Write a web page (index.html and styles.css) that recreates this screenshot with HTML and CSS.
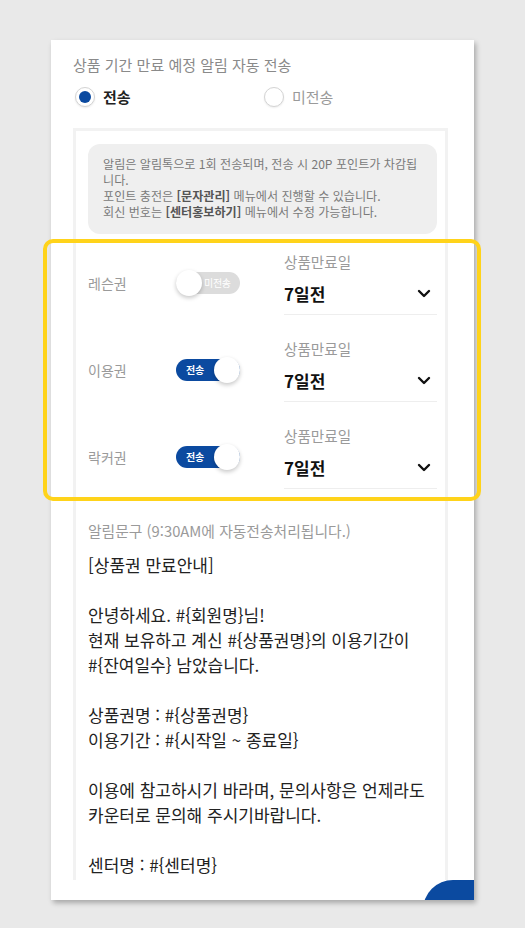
FILE: index.html
```html
<!DOCTYPE html>
<html lang="ko">
<head>
<meta charset="utf-8">
<title>상품 기간 만료 예정 알림</title>
<link rel="stylesheet" href="styles.css">
</head>
<body>
<div class="stage">
  <div class="card">
    <p class="title">상품 기간 만료 예정 알림 자동 전송</p>
    <div class="radios">
      <div class="radio on"><span class="dot"></span><span class="rtext">전송</span></div>
      <div class="radio"><span class="dot"></span><span class="rtext">미전송</span></div>
    </div>
    <div class="panel">
      <div class="notice">알림은 알림톡으로 1회 전송되며, 전송 시 20P 포인트가 차감됩니다.<br>포인트 충전은 <b>[문자관리]</b> 메뉴에서 진행할 수 있습니다.<br>회신 번호는 <b>[센터홍보하기]</b> 메뉴에서 수정 가능합니다.</div>
      <div class="rows">
        <div class="highlight"></div>
        <div class="row">
          <span class="row-label">레슨권</span>
          <span class="toggle off"><span class="knob"></span><span class="ttext">미전송</span></span>
          <div class="select">
            <div class="sel-label">상품만료일</div>
            <div class="sel-value"><span>7일전</span><svg class="chev" width="14" height="9" viewBox="0 0 14 9"><path d="M2 2 L7 7 L12 2" fill="none" stroke="#111" stroke-width="2.4" stroke-linecap="round" stroke-linejoin="round"/></svg></div>
          </div>
        </div>
        <div class="row">
          <span class="row-label">이용권</span>
          <span class="toggle on"><span class="ttext">전송</span><span class="knob"></span></span>
          <div class="select">
            <div class="sel-label">상품만료일</div>
            <div class="sel-value"><span>7일전</span><svg class="chev" width="14" height="9" viewBox="0 0 14 9"><path d="M2 2 L7 7 L12 2" fill="none" stroke="#111" stroke-width="2.4" stroke-linecap="round" stroke-linejoin="round"/></svg></div>
          </div>
        </div>
        <div class="row">
          <span class="row-label">락커권</span>
          <span class="toggle on"><span class="ttext">전송</span><span class="knob"></span></span>
          <div class="select">
            <div class="sel-label">상품만료일</div>
            <div class="sel-value"><span>7일전</span><svg class="chev" width="14" height="9" viewBox="0 0 14 9"><path d="M2 2 L7 7 L12 2" fill="none" stroke="#111" stroke-width="2.4" stroke-linecap="round" stroke-linejoin="round"/></svg></div>
          </div>
        </div>
      </div>
      <div class="msg">
        <p class="msg-label">알림문구 (9:30AM에 자동전송처리됩니다.)</p>
        <div class="msg-body">[상품권 만료안내]<br><br>안녕하세요. #{회원명}님!<br>현재 보유하고 계신 #{상품권명}의 이용기간이<br>#{잔여일수} 남았습니다.<br><br>상품권명 : #{상품권명}<br>이용기간 : #{시작일 ~ 종료일}<br><br>이용에 참고하시기 바라며, 문의사항은 언제라도<br>카운터로 문의해 주시기바랍니다.<br><br>센터명 : #{센터명}</div>
      </div>
    </div>
    <div class="fab-clip"><div class="fab"></div></div>
  </div>
</div>
</body>
</html>
```
FILE: styles.css
```css
* { box-sizing: border-box; }
html, body { margin: 0; padding: 0; }
body {
  background: #e9e9e9;
  font-family: "Noto Sans CJK KR", "Noto Sans", sans-serif;
  width: 525px;
  height: 928px;
  overflow: hidden;
}
.stage {
  padding: 40px 0 0 51px;
}
.card {
  position: relative;
  width: 423px;
  height: 860px;
  background: #fff;
  box-shadow: 2px 3px 5px rgba(0, 0, 0, 0.28);
  padding: 15px 0 20px 0;
  display: flex;
  flex-direction: column;
}
.title {
  margin: 0 0 0 22px;
  font-size: 15px;
  line-height: 20px;
  color: #8a8a8a;
}
.radios {
  margin: 10px 0 0 24px;
  height: 24px;
  display: grid;
  grid-template-columns: 189px auto;
  align-items: center;
}
.radio {
  display: flex;
  align-items: center;
  gap: 8px;
}
.dot {
  width: 20px;
  height: 20px;
  border-radius: 50%;
  border: 1px solid #d4d4d4;
  background: #fff;
  box-shadow: 0 1px 2px rgba(0, 0, 0, 0.08);
  display: flex;
  align-items: center;
  justify-content: center;
}
.radio.on .dot::after {
  content: "";
  width: 12px;
  height: 12px;
  border-radius: 50%;
  background: #0b4aa0;
}
.rtext {
  font-size: 15px;
  line-height: 20px;
  color: #9a9a9a;
}
.radio.on .rtext {
  color: #222;
  font-weight: 700;
}
.panel {
  flex: 1;
  margin: 19px 26px 0 22px;
  border: 3px solid #f2f2f2;
  border-bottom: none;
  padding: 13px 8px 0 12px;
}
.notice {
  background: #efefef;
  border-radius: 12px;
  padding: 12px 12px 14px 15px;
  font-size: 12.1px;
  line-height: 16px;
  color: #7a7a7a;
}
.notice b {
  color: #555;
  font-weight: 700;
}
.rows {
  position: relative;
  margin-top: 17px;
  display: flex;
  flex-direction: column;
  gap: 23px;
}
.highlight {
  position: absolute;
  top: -12px;
  bottom: -12px;
  left: -45px;
  right: -44px;
  border: 4px solid #ffd31a;
  border-radius: 10px;
  pointer-events: none;
  z-index: 2;
}
.row {
  display: flex;
  align-items: center;
}
.row-label {
  width: 88px;
  font-size: 14px;
  color: #9a9a9a;
}
.toggle {
  position: relative;
  width: 64px;
  height: 22px;
  border-radius: 11px;
  display: flex;
  align-items: center;
}
.toggle.off { background: #dcdcdc; }
.toggle.on { background: #0b4aa0; }
.knob {
  position: absolute;
  top: -2px;
  width: 26px;
  height: 26px;
  border-radius: 50%;
  background: #fff;
  box-shadow: 0 2px 4px rgba(0, 0, 0, 0.22);
}
.toggle.off .knob { left: 0; }
.toggle.on .knob { right: 0; }
.ttext {
  font-size: 10px;
  line-height: 12px;
  color: #fff;
  letter-spacing: -0.3px;
}
.toggle.off .ttext { margin-left: 28px; }
.toggle.on .ttext { margin-left: 10px; font-weight: 700; }
.select {
  flex: 1;
  margin-left: 44px;
}
.sel-label {
  font-size: 14.6px;
  line-height: 22px;
  color: #9a9a9a;
}
.sel-value {
  height: 42px;
  border-bottom: 1px solid #eeeeee;
  display: flex;
  align-items: center;
  justify-content: space-between;
  font-size: 17px;
  font-weight: 700;
  color: #111;
  padding-right: 6px;
}
.msg {
  margin-top: 32px;
}
.msg-label {
  margin: 0;
  font-size: 14.8px;
  line-height: 20px;
  color: #9a9a9a;
}
.msg-body {
  margin-top: 11px;
  font-size: 17px;
  line-height: 25px;
  color: #222;
}
.fab-clip {
  position: absolute;
  right: 0;
  bottom: 0;
  width: 51px;
  height: 20px;
  overflow: hidden;
}
.fab {
  width: 120px;
  height: 60px;
  border-radius: 30px;
  background: #0b4aa0;
}
```
